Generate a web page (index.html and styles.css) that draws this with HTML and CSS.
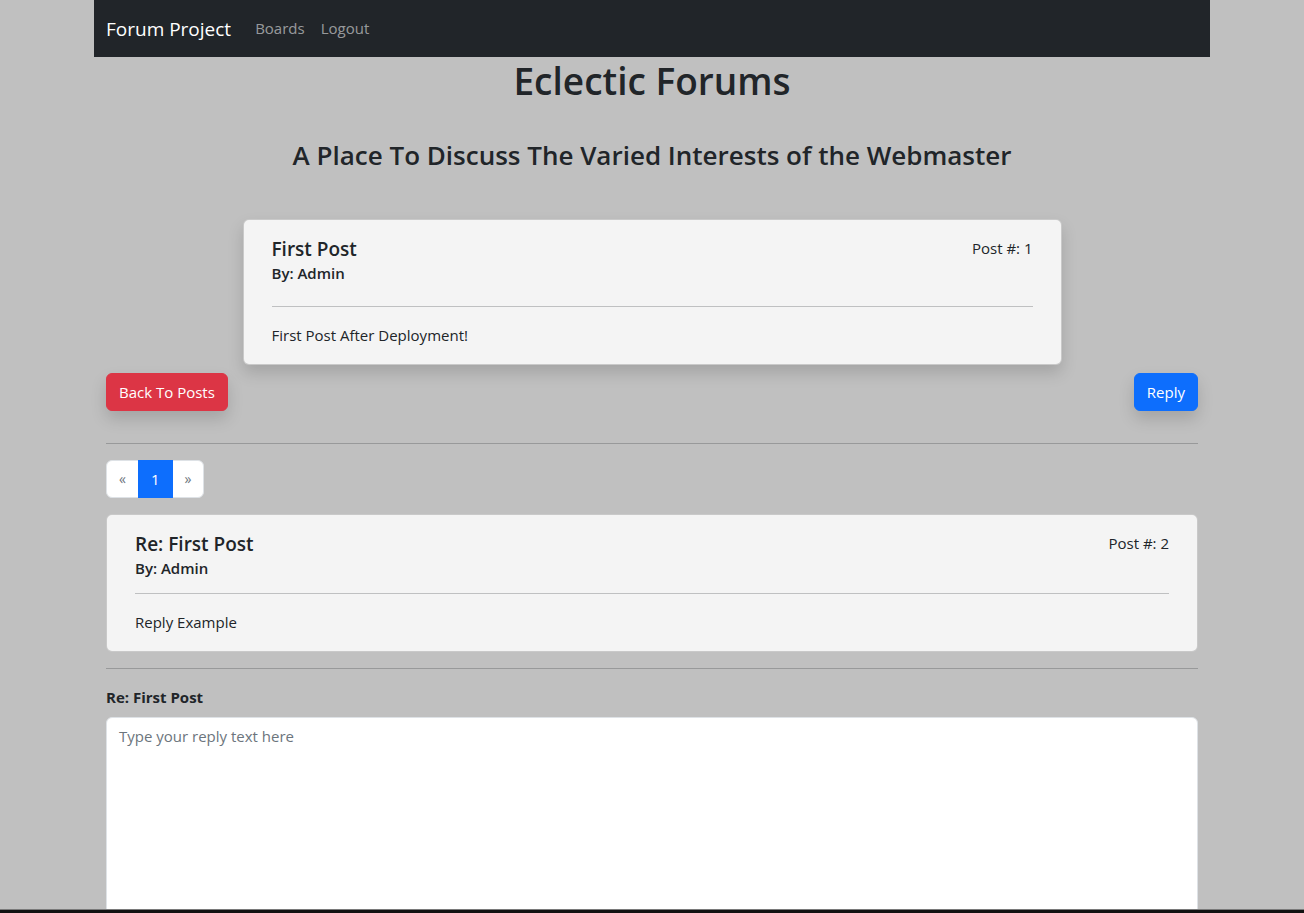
FILE: index.html
```html
<!DOCTYPE html>
<html lang="en">
<head>
<meta charset="utf-8">
<title>Eclectic Forums</title>
<link rel="stylesheet" href="styles.css">
</head>
<body>
<div class="container">
  <nav class="navbar">
    <a class="brand" href="#">Forum Project</a>
    <a class="nav-link" href="#">Boards</a>
    <a class="nav-link" href="#">Logout</a>
  </nav>
  <main class="main">
    <h1 class="site-title">Eclectic Forums</h1>
    <h3 class="site-sub">A Place To Discuss The Varied Interests of the Webmaster</h3>

    <div class="card card-op">
      <div class="card-head">
        <div>
          <div class="post-title">First Post</div>
          <div class="post-by">By: Admin</div>
        </div>
        <div class="post-num">Post #: 1</div>
      </div>
      <hr class="card-hr op-hr">
      <div class="post-text">First Post After Deployment!</div>
    </div>

    <div class="actions">
      <a class="btn btn-danger" href="#">Back To Posts</a>
      <a class="btn btn-primary" href="#">Reply</a>
    </div>

    <hr class="rule">

    <ul class="pagination">
      <li class="page disabled">&laquo;</li>
      <li class="page active">1</li>
      <li class="page disabled">&raquo;</li>
    </ul>

    <div class="card card-reply">
      <div class="card-head">
        <div>
          <div class="post-title">Re: First Post</div>
          <div class="post-by">By: Admin</div>
        </div>
        <div class="post-num">Post #: 2</div>
      </div>
      <hr class="card-hr reply-hr">
      <div class="post-text">Reply Example</div>
    </div>

    <hr class="rule rule-2">

    <form class="reply-form">
      <label class="reply-label" for="reply">Re: First Post</label>
      <textarea id="reply" class="reply-input" placeholder="Type your reply text here"></textarea>
    </form>
  </main>
</div>
<div class="screen-edge"></div>
</body>
</html>
```

FILE: styles.css
```css
* { box-sizing: border-box; }

html, body {
  margin: 0;
  background: #c0c0c0;
}

body {
  font-family: "Open Sans", "Noto Sans", sans-serif;
  font-size: 15px;
  line-height: 1.5;
  color: #212529;
}

.container {
  width: 1140px;
  margin: 0 auto;
  padding: 0 12px;
}

.navbar {
  display: flex;
  align-items: center;
  background: #212529;
  height: 57px;
  padding: 0 12px;
}

.brand {
  color: #fff;
  font-size: 19px;
  line-height: 30px;
  text-decoration: none;
  margin-right: 16px;
}

.nav-link {
  color: rgba(255, 255, 255, 0.55);
  text-decoration: none;
  padding: 8px 8px;
  font-size: 15px;
}

.main {
  padding: 0 12px 0;
}

.site-title {
  text-align: center;
  font-size: 37px;
  font-weight: 600;
  line-height: 48px;
  margin: 0 0 8px;
}

.site-sub {
  text-align: center;
  font-size: 26px;
  font-weight: 600;
  line-height: 34px;
  margin: 33px 0 0;
}

.card {
  background: #f4f4f4;
  border: 1px solid rgba(0, 0, 0, 0.175);
  border-radius: 6px;
  padding: 16px 28px 17px;
}

.card-op {
  width: 75%;
  margin: 47px auto 0;
  box-shadow: 0 8px 16px rgba(0, 0, 0, 0.15);
}

.card-head {
  display: flex;
  justify-content: space-between;
  align-items: flex-start;
}

.post-title {
  font-size: 19px;
  font-weight: 600;
  line-height: 24px;
  margin-top: 1px;
}

.post-by {
  font-weight: 600;
  line-height: 24px;
}

.post-num {
  line-height: 24px;
}

.card-hr {
  border: 0;
  border-top: 1px solid rgba(33, 37, 41, 0.25);
  margin: 0 0 16px;
}

.op-hr { margin-top: 21px; }
.reply-hr { margin-top: 13px; }

.post-text {
  line-height: 24px;
}

.actions {
  display: flex;
  justify-content: space-between;
  margin-top: 8px;
}

.btn {
  display: inline-block;
  padding: 6px 12px;
  border: 1px solid transparent;
  border-radius: 6px;
  color: #fff;
  text-decoration: none;
  font-size: 15px;
  line-height: 24px;
  box-shadow: 0 8px 16px rgba(0, 0, 0, 0.15);
}

.btn-danger { background: #dc3545; border-color: #dc3545; }
.btn-primary { background: #0d6efd; border-color: #0d6efd; }

.rule {
  border: 0;
  border-top: 1px solid rgba(33, 37, 41, 0.25);
  margin: 32px 0 16px;
}

.pagination {
  display: flex;
  list-style: none;
  padding: 0;
  margin: 0 0 16px;
}

.page {
  padding: 6px 12px;
  line-height: 24px;
  font-size: 15px;
  background: #fff;
  border: 1px solid #dee2e6;
  margin-left: -1px;
}

.page:first-child {
  margin-left: 0;
  border-radius: 6px 0 0 6px;
}

.page:last-child {
  border-radius: 0 6px 6px 0;
}

.page.disabled {
  color: #6c757d;
  font-size: 14px;
}

.page.active {
  background: #0d6efd;
  border-color: #0d6efd;
  color: #fff;
  position: relative;
}

.card-reply {
  margin-top: 1px;
}

.rule-2 {
  margin: 16px 0 16px;
}

.reply-form {
  display: flex;
  flex-direction: column;
}

.reply-label {
  font-weight: 700;
  font-size: 15px;
  line-height: 24px;
  margin-bottom: 8px;
}

.reply-input {
  width: 100%;
  height: 260px;
  padding: 6px 12px;
  font-family: inherit;
  font-size: 15px;
  line-height: 24px;
  color: #212529;
  background: #fff;
  border: 1px solid #dee2e6;
  border-radius: 6px;
  resize: vertical;
}

.reply-input::placeholder {
  color: #6c757d;
}

.screen-edge {
  position: fixed;
  left: 0;
  right: 0;
  bottom: 0;
  height: 4px;
  background: #111;
  border-top: 1px solid #7a7a7a;
}
```
